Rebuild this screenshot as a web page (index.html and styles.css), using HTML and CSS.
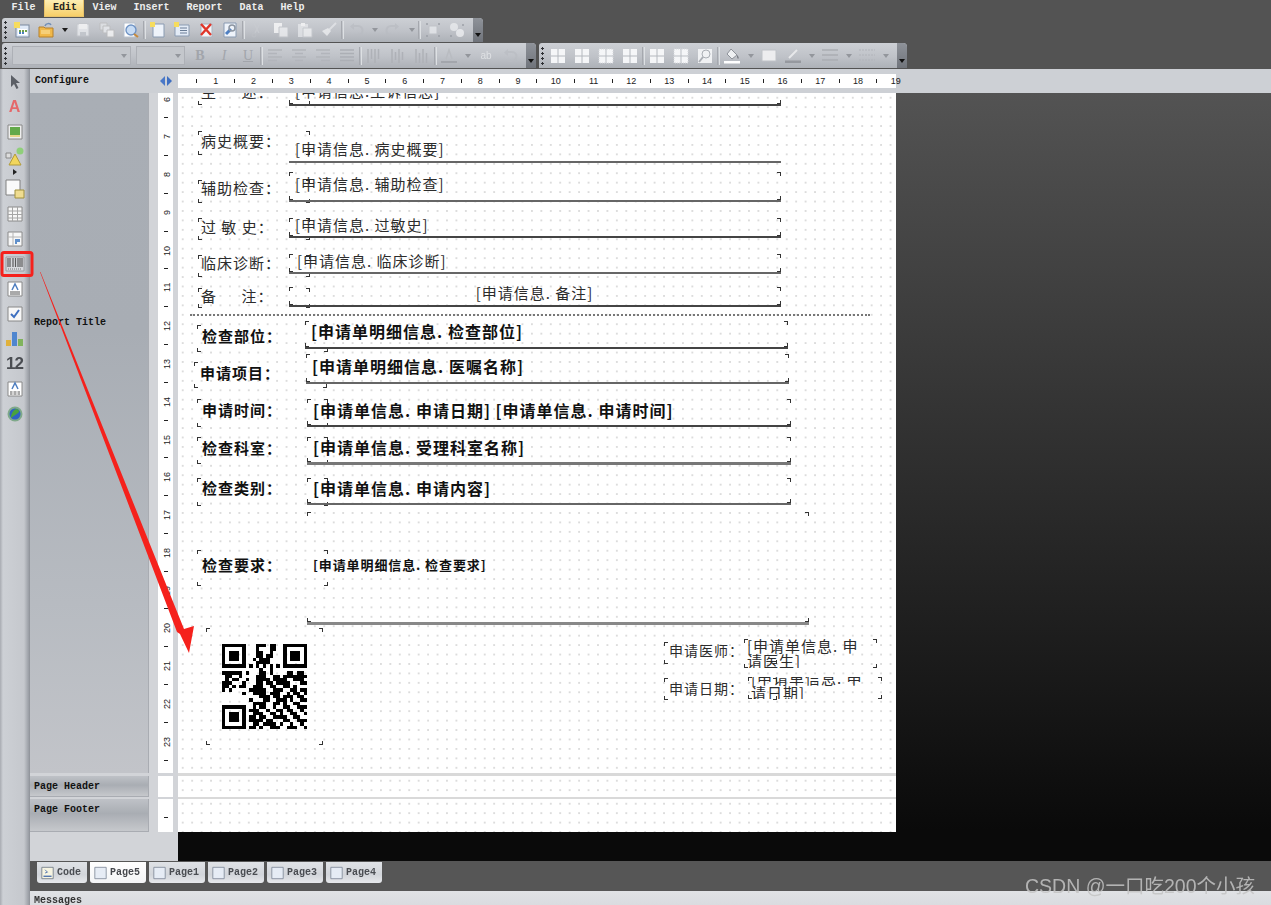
FILE: index.html
```html
<!DOCTYPE html>
<html lang="zh-CN">
<head>
<meta charset="utf-8">
<title>Report Designer</title>
<link rel="stylesheet" href="styles.css">
</head>
<body>
<svg class="defs" width="0" height="0" aria-hidden="true">
  <symbol id="new" viewBox="0 0 16 16"><rect x="2" y="3" width="13" height="12" fill="#dfe9f7" stroke="#7a8aa0"/><rect x="4" y="7" width="9" height="6" fill="#fff"/><path d="M5 8h2v2H5zM8 8h2v2H8zM11 8h2v2h-2z" fill="#6fa04a"/><path d="M5 10h2v2H5zM8 10h2v2H8z" fill="#4a7fc0"/><path d="M0 0h6v6H0z" fill="#f6dc5e"/></symbol>
  <symbol id="open" viewBox="0 0 16 16"><path d="M1 5h5l1 1h8v9H1z" fill="#f0b84a" stroke="#b5802c"/><path d="M3 9h9M3 11h9" stroke="#fbe6a8"/><path d="M7 4c1-3 5-3 6-1" fill="none" stroke="#6f8db5" stroke-width="1.5"/></symbol>
  <symbol id="save" viewBox="0 0 16 16"><path d="M2 2h12v12H2z" fill="#eef0f3" stroke="#c3c6cb"/><path d="M4 2h8v5H4z" fill="#fff"/><path d="M5 10h6v4H5z" fill="#c5c9cf"/></symbol>
  <symbol id="saveall" viewBox="0 0 16 16"><path d="M1 1h7v7H1z" fill="#e5e7ea" stroke="#bbb"/><path d="M4 4h7v7H4z" fill="#eef0f3" stroke="#bbb"/><path d="M8 8h7v7H8z" fill="#fff" stroke="#bbb"/></symbol>
  <symbol id="preview" viewBox="0 0 16 16"><path d="M1 1h11v14H1z" fill="#fff" stroke="#b9c2ce"/><circle cx="8" cy="8" r="5" fill="#c7dcf5" stroke="#6f93c4" stroke-width="1.4"/><path d="M11 12l4 3" stroke="#c78a3b" stroke-width="2"/></symbol>
  <symbol id="page" viewBox="0 0 16 16"><path d="M3 2h11v13H3z" fill="#eef3fa" stroke="#8a9bb2"/><path d="M0 0h5v5H0z" fill="#f6dc5e"/></symbol>
  <symbol id="dialog" viewBox="0 0 16 16"><path d="M1 3h14v11H1z" fill="#e3ebf6" stroke="#8a9bb2"/><path d="M6 6h7M6 8.500h7M6 11h7" stroke="#6a7d96"/><path d="M0 0h5v5H0z" fill="#f6dc5e"/></symbol>
  <symbol id="del" viewBox="0 0 16 16"><path d="M3 2h11v13H3z" fill="#f3f5f8" stroke="#a9b3c0"/><path d="M3 2l10 11M13 2L3 13" stroke="#e0362a" stroke-width="2.400"/></symbol>
  <symbol id="setup" viewBox="0 0 16 16"><path d="M2 1h12v14H2z" fill="#eef3fa" stroke="#8a9bb2"/><path d="M4 12l5-5" stroke="#4e7fc2" stroke-width="3"/><circle cx="10" cy="6" r="3" fill="none" stroke="#8c95a1" stroke-width="1.500"/></symbol>
  <symbol id="cut" viewBox="0 0 16 16"><path d="M11 1L6 11M5 1l5 10" stroke="#c9ccd1" stroke-width="1.500" fill="none"/><circle cx="5" cy="13" r="2" fill="none" stroke="#c0c3c8"/></symbol>
  <symbol id="copy" viewBox="0 0 16 16"><path d="M1 1h8v10H1z" fill="#fff"/><path d="M6 5h9v10H6z" fill="#f4f5f7" stroke="#c2c5ca"/></symbol>
  <symbol id="paste" viewBox="0 0 16 16"><path d="M1 2h10v13H1z" fill="#e9ebee"/><path d="M4 1h4v3H4z" fill="#fff"/><path d="M6 6h9v9H6z" fill="#f7f8f9" stroke="#c8cbd0"/></symbol>
  <symbol id="brush" viewBox="0 0 16 16"><path d="M15 1L8 8" stroke="#e8e9ec" stroke-width="2"/><path d="M1 9l6-3 3 3-4 5z" fill="#f2f3f5"/></symbol>
  <symbol id="undo" viewBox="0 0 16 16"><path d="M5 4h5a4 4 0 0 1 0 9H6" fill="none" stroke="#b9bcc2" stroke-width="2"/><path d="M6 1v7L2 4.500z" fill="#b9bcc2"/></symbol>
  <symbol id="redo" viewBox="0 0 16 16"><path d="M11 4H6a4 4 0 0 0 0 9h4" fill="none" stroke="#b9bcc2" stroke-width="2"/><path d="M10 1v7l4-3.500z" fill="#b9bcc2"/></symbol>
  <symbol id="group" viewBox="0 0 16 16"><path d="M4 4h8v8H4z" fill="#eceef1" stroke="#c0c3c8"/><path d="M1 1h2v2H1zM13 1h2v2h-2zM1 13h2v2H1zM13 13h2v2h-2z" fill="#9a9ea5"/></symbol>
  <symbol id="ungroup" viewBox="0 0 16 16"><circle cx="5" cy="5" r="4" fill="#eef0f2"/><circle cx="11" cy="11" r="4" fill="#f4f5f7"/><path d="M13 2h2v2h-2zM1 13h2v2H1z" fill="#9a9ea5"/></symbol>
  <symbol id="left" viewBox="0 0 16 16"><path d="M1 2h14M1 5.500h9M1 9h14M1 12.500h9" stroke="#b2b5bb" stroke-width="1.500"/></symbol>
  <symbol id="center" viewBox="0 0 16 16"><path d="M1 2h14M4 5.500h8M1 9h14M4 12.500h8" stroke="#b2b5bb" stroke-width="1.500"/></symbol>
  <symbol id="right" viewBox="0 0 16 16"><path d="M1 2h14M6 5.500h9M1 9h14M6 12.500h9" stroke="#b2b5bb" stroke-width="1.500"/></symbol>
  <symbol id="just" viewBox="0 0 16 16"><path d="M1 2h14M1 5.500h14M1 9h14M1 12.500h14" stroke="#acafb5" stroke-width="1.500"/></symbol>
  <symbol id="vtop" viewBox="0 0 16 16"><path d="M2 1v14M5.500 1v10M9 1v14M12.500 1v10" stroke="#aeb1b7" stroke-width="1.500"/></symbol>
  <symbol id="vmid" viewBox="0 0 16 16"><path d="M2 1v14M5.500 4v8M9 1v14M12.500 4v8" stroke="#aeb1b7" stroke-width="1.500"/></symbol>
  <symbol id="vbot" viewBox="0 0 16 16"><path d="M2 1v14M5.500 5v10M9 1v14M12.500 5v10" stroke="#aeb1b7" stroke-width="1.500"/></symbol>
  <symbol id="color" viewBox="0 0 16 16"><path d="M5 11L8 2l3 9" fill="none" stroke="#b9bcc1" stroke-width="1.500"/><path d="M0 13h16v2H0z" fill="#a3a6ac"/></symbol>
  <symbol id="grid" viewBox="0 0 16 16"><path d="M1 1h14v14H1z" fill="#f5f6f8"/><path d="M8 1v14M1 8h14" stroke="#b4b8be"/></symbol>
  <symbol id="griddot" viewBox="0 0 16 16"><path d="M1 1h14v14H1z" fill="#f5f6f8" stroke="#d7d9dd" stroke-dasharray="1 1"/><path d="M8 1v14M1 8h14" stroke="#b9bdc3"/></symbol>
  <symbol id="gridzoom" viewBox="0 0 16 16"><path d="M1 1h14v14H1z" fill="#f0f1f3"/><circle cx="9" cy="6" r="4" fill="none" stroke="#aaaeb4"/><path d="M6 9l-4 5" stroke="#aaaeb4" stroke-width="2"/></symbol>
  <symbol id="fill" viewBox="0 0 16 16"><path d="M7 1l6 6-5 4-5-5z" fill="#eef0f2" stroke="#8d9198"/><path d="M13 7c2 2 2 3 1 4-1-1-1-3-1-4z" fill="#70747b"/><path d="M0 13h16v2.500H0z" fill="#fff"/></symbol>
  <symbol id="rect" viewBox="0 0 16 16"><path d="M1 2h14v11H1z" fill="#ededef" stroke="#bfc2c7"/></symbol>
  <symbol id="line" viewBox="0 0 16 16"><path d="M4 10l8-8" stroke="#e7e8ea" stroke-width="2"/><path d="M0 12.500h16V15H0z" fill="#96999f"/></symbol>
  <symbol id="lines" viewBox="0 0 16 16"><path d="M0 2h16M0 7h16M0 12h16" stroke="#aaadb3" stroke-width="1.500"/></symbol>
  <symbol id="dash" viewBox="0 0 16 16"><path d="M0 2h16M0 7h16M0 12h16" stroke="#b1b4ba" stroke-dasharray="2 1"/></symbol>
  <symbol id="pointer" viewBox="0 0 16 16"><path d="M4 1v12l3-3 2.500 5 2-1L9 9h4z" fill="#5b5f66"/></symbol>
  <symbol id="img" viewBox="0 0 16 16"><path d="M1 1h14v14H1z" fill="#eee" stroke="#888"/><path d="M3 3h10v8H3z" fill="#63a94a"/><path d="M3 11h10v2H3z" fill="#e6d78a"/></symbol>
  <symbol id="shapes" viewBox="0 0 20 20"><path d="M1 6h5v5H1z" fill="#ddd" stroke="#888"/><path d="M10 7l6 11H4z" fill="#f2d65c" stroke="#b09a3a"/><circle cx="15" cy="4" r="3.500" fill="#8fcf7a"/></symbol>
  <symbol id="panel" viewBox="0 0 20 20"><path d="M1 1h14v15H1z" fill="#fafafa" stroke="#808080"/><path d="M10 11h9v8h-9z" fill="#efdc90" stroke="#a0903f"/></symbol>
  <symbol id="table" viewBox="0 0 16 16"><path d="M1 1h14v14H1z" fill="#f7f7f7" stroke="#8a8a8a"/><path d="M1 5h14M1 8.500h14M1 12h14M5.500 1v14M10.500 1v14" stroke="#a5a5a5"/></symbol>
  <symbol id="cross" viewBox="0 0 16 16"><path d="M1 1h14v14H1z" fill="#f7f7f7" stroke="#8a8a8a"/><path d="M6 1v14M1 6h14" stroke="#b5b5b5"/><path d="M8 8h5v3H8zM8 11h2v2H8z" fill="#5f8fca"/></symbol>
  <symbol id="barcode" viewBox="0 0 20 16"><path d="M1 1h18v14H1z" fill="#d8dade" stroke="#9a9da2"/><path d="M3 2v9M5 2v9M8 2v9M10.500 2v9M13 2v9M15 2v9M17 2v9" stroke="#5a5a5a" stroke-width="1.200"/><path d="M3 13h14" stroke="#777" stroke-dasharray="1 1"/></symbol>
  <symbol id="textbox" viewBox="0 0 16 16"><path d="M1 1h14v14H1z" fill="#fff" stroke="#888"/><path d="M5 9l3-6 3 6" fill="none" stroke="#4f7fc0" stroke-width="1.500"/><path d="M3 11h10M3 13h10" stroke="#555"/></symbol>
  <symbol id="check" viewBox="0 0 16 16"><path d="M1 1h14v14H1z" fill="#f7f7f7" stroke="#888"/><path d="M4 8l3 3 5-7" fill="none" stroke="#3d6fc0" stroke-width="2"/></symbol>
  <symbol id="bars" viewBox="0 0 20 16"><path d="M1 9h5v6H1z" fill="#e0b13c"/><path d="M7 1h5v14H7z" fill="#4f86cf"/><path d="M13 8h5v7h-5z" fill="#80b35c"/></symbol>
  <symbol id="agrid" viewBox="0 0 16 16"><path d="M1 1h14v14H1z" fill="#fff" stroke="#888"/><path d="M5 8l3-6 3 6" fill="none" stroke="#4f7fc0" stroke-width="1.500"/><path d="M3 10h10v4H3z" fill="#aaa"/><path d="M6 10v4M10 10v4" stroke="#fff"/></symbol>
  <symbol id="globe" viewBox="0 0 16 16"><circle cx="8" cy="8" r="7.500" fill="#7fa98a"/><circle cx="8" cy="8" r="5.500" fill="#2f62c4"/><path d="M9 3c3 0 4 3 2 4-2 2-5 3-7 5 0-4 2-8 5-9z" fill="#49a33c"/></symbol>
  <symbol id="code" viewBox="0 0 16 16"><path d="M1 1h14v14H1z" fill="#f6f4e2" stroke="#6d7684"/><path d="M5 4l3 3-3 1" fill="none" stroke="#3c64a8"/><path d="M3 12h10" stroke="#3c64a8" stroke-width="1.500"/></symbol>
  <symbol id="sheet" viewBox="0 0 16 16"><path d="M1 1h14v14H1z" fill="#e6ecf5" stroke="#7c8696"/></symbol>
</svg>

<div class="app">
  <header class="top">
    <nav class="menu">
      <span class="menu-item">File</span>
      <span class="menu-item active">Edit</span>
      <span class="menu-item">View</span>
      <span class="menu-item">Insert</span>
      <span class="menu-item">Report</span>
      <span class="menu-item">Data</span>
      <span class="menu-item">Help</span>
    </nav>
    <div class="bar bar-one">
      <i class="grip"></i>
      <span class="cell"><svg class="ic"><use href="#new"/></svg></span>
      <span class="cell"><svg class="ic"><use href="#open"/></svg></span>
      <span class="dd dark"></span>
      <span class="cell off"><svg class="ic"><use href="#save"/></svg></span>
      <span class="cell off"><svg class="ic"><use href="#saveall"/></svg></span>
      <span class="cell"><svg class="ic"><use href="#preview"/></svg></span>
      <i class="sep"></i>
      <span class="cell"><svg class="ic"><use href="#page"/></svg></span>
      <span class="cell"><svg class="ic"><use href="#dialog"/></svg></span>
      <span class="cell"><svg class="ic"><use href="#del"/></svg></span>
      <span class="cell"><svg class="ic"><use href="#setup"/></svg></span>
      <i class="sep"></i>
      <span class="cell off"><svg class="ic"><use href="#cut"/></svg></span>
      <span class="cell off"><svg class="ic"><use href="#copy"/></svg></span>
      <span class="cell off"><svg class="ic"><use href="#paste"/></svg></span>
      <span class="cell off"><svg class="ic"><use href="#brush"/></svg></span>
      <i class="sep"></i>
      <span class="cell off"><svg class="ic"><use href="#undo"/></svg></span>
      <span class="dd"></span>
      <span class="cell off"><svg class="ic"><use href="#redo"/></svg></span>
      <span class="dd"></span>
      <i class="sep"></i>
      <span class="cell off"><svg class="ic"><use href="#group"/></svg></span>
      <span class="cell off"><svg class="ic"><use href="#ungroup"/></svg></span>
      <span class="more"></span>
    </div>
    <div class="bar-row">
      <div class="bar bar-two">
        <i class="grip"></i>
        <span class="combo combo-font"><b class="dd"></b></span>
        <span class="combo combo-size"><b class="dd"></b></span>
        <span class="cell letter bold-l">B</span>
        <span class="cell letter ital-l">I</span>
        <span class="cell letter under-l">U</span>
        <i class="sep"></i>
        <span class="cell"><svg class="ic"><use href="#left"/></svg></span>
        <span class="cell"><svg class="ic"><use href="#center"/></svg></span>
        <span class="cell"><svg class="ic"><use href="#right"/></svg></span>
        <span class="cell"><svg class="ic"><use href="#just"/></svg></span>
        <i class="sep"></i>
        <span class="cell"><svg class="ic"><use href="#vtop"/></svg></span>
        <span class="cell"><svg class="ic"><use href="#vmid"/></svg></span>
        <span class="cell"><svg class="ic"><use href="#vbot"/></svg></span>
        <i class="sep"></i>
        <span class="cell"><svg class="ic"><use href="#color"/></svg></span>
        <span class="dd"></span>
        <span class="cell letter ab">ab</span>
        <span class="cell off"><svg class="ic"><use href="#undo"/></svg></span>
        <span class="more"></span>
      </div>
      <div class="bar bar-three">
        <i class="grip"></i>
        <span class="cell"><svg class="ic"><use href="#grid"/></svg></span>
        <span class="cell"><svg class="ic"><use href="#grid"/></svg></span>
        <span class="cell"><svg class="ic"><use href="#griddot"/></svg></span>
        <span class="cell"><svg class="ic"><use href="#grid"/></svg></span>
        <i class="sep"></i>
        <span class="cell"><svg class="ic"><use href="#grid"/></svg></span>
        <span class="cell"><svg class="ic"><use href="#griddot"/></svg></span>
        <span class="cell"><svg class="ic"><use href="#gridzoom"/></svg></span>
        <i class="sep"></i>
        <span class="cell"><svg class="ic"><use href="#fill"/></svg></span>
        <span class="dd"></span>
        <span class="cell"><svg class="ic"><use href="#rect"/></svg></span>
        <span class="cell"><svg class="ic"><use href="#line"/></svg></span>
        <span class="dd"></span>
        <span class="cell"><svg class="ic"><use href="#lines"/></svg></span>
        <span class="dd"></span>
        <span class="cell"><svg class="ic"><use href="#dash"/></svg></span>
        <span class="dd"></span>
        <span class="more"></span>
      </div>
    </div>
  </header>

  <div class="main">
    <aside class="tools">
      <span class="tool"><svg class="ic"><use href="#pointer"/></svg></span>
      <span class="tool tool-a">A</span>
      <span class="tool"><svg class="ic"><use href="#img"/></svg></span>
      <span class="tool"><svg class="ic-lg"><use href="#shapes"/></svg></span>
      <span class="tool-more"></span>
      <span class="tool"><svg class="ic-lg"><use href="#panel"/></svg></span>
      <span class="tool"><svg class="ic"><use href="#table"/></svg></span>
      <span class="tool"><svg class="ic"><use href="#cross"/></svg></span>
      <span class="tool"><svg class="ic-lg"><use href="#barcode"/></svg></span>
      <span class="tool"><svg class="ic"><use href="#textbox"/></svg></span>
      <span class="tool"><svg class="ic"><use href="#check"/></svg></span>
      <span class="tool"><svg class="ic-lg"><use href="#bars"/></svg></span>
      <span class="tool tool-num">12</span>
      <span class="tool"><svg class="ic"><use href="#agrid"/></svg></span>
      <span class="tool"><svg class="ic"><use href="#globe"/></svg></span>
    </aside>

    <div class="work">
      <div class="rule-row">
        <span class="configure">Configure</span>
        <span class="arrows"><i class="ar-l"></i><i class="ar-r"></i></span>
        <div class="hruler">
          <i></i><span>1</span><i></i><span>2</span><i></i><span>3</span><i></i><span>4</span><i></i><span>5</span><i></i><span>6</span><i></i><span>7</span><i></i><span>8</span><i></i><span>9</span><i></i><span>10</span><i></i><span>11</span><i></i><span>12</span><i></i><span>13</span><i></i><span>14</span><i></i><span>15</span><i></i><span>16</span><i></i><span>17</span><i></i><span>18</span><i></i><span>19</span>
        </div>
      </div>

      <div class="designer">
        <div class="side">
          <div class="side-row row-title">
            <div class="band-label label-title">Report Title</div>
            <div class="vruler">
              <div class="vr-track">
                <span>6</span><i></i><span>7</span><i></i><span>8</span><i></i><span>9</span><i></i><span>10</span><i></i><span>11</span><i></i><span>12</span><i></i><span>13</span><i></i><span>14</span><i></i><span>15</span><i></i><span>16</span><i></i><span>17</span><i></i><span>18</span><i></i><span>19</span><i></i><span>20</span><i></i><span>21</span><i></i><span>22</span><i></i><span>23</span><i></i>
              </div>
            </div>
          </div>
          <div class="side-row row-header">
            <div class="band-label label-small">Page Header</div>
            <div class="vruler"></div>
          </div>
          <div class="side-row row-footer">
            <div class="band-label label-small">Page Footer</div>
            <div class="vruler vr-track"><i></i></div>
          </div>
        </div>

        <div class="stage">
          <div class="page">
            <section class="band band-title">
              <div class="box t l-zhu">主&emsp;&ensp;述：</div>
              <div class="box t f-zhu line">[申请信息.主诉信息]</div>
              <div class="box t l-hist">病史概要：</div>
              <div class="t f-hist line field">[申请信息. 病史概要]</div>
              <div class="box t l-aux">辅助检查：</div>
              <div class="box t f-aux line">[申请信息. 辅助检查]</div>
              <div class="box t l-all">过 敏 史：</div>
              <div class="box t f-all line">[申请信息. 过敏史]</div>
              <div class="box t l-cli">临床诊断：</div>
              <div class="box t f-cli line">[申请信息. 临床诊断]</div>
              <div class="box t l-note">备&emsp;&ensp;注：</div>
              <div class="box t f-note line">[申请信息. 备注]</div>
              <div class="dashed"></div>

              <div class="box b l-part">检查部位：</div>
              <div class="box b f-part line">[申请单明细信息. 检查部位]</div>
              <div class="box b l-item">申请项目：</div>
              <div class="box b f-item line">[申请单明细信息. 医嘱名称]</div>
              <div class="box b l-time">申请时间：</div>
              <div class="box b f-time line">[申请单信息. 申请日期] [申请单信息. 申请时间]</div>
              <div class="box b l-dept">检查科室：</div>
              <div class="box b f-dept line">[申请单信息. 受理科室名称]</div>
              <div class="box b l-type">检查类别：</div>
              <div class="box b f-type line">[申请单信息. 申请内容]</div>
              <div class="box b l-req">检查要求：</div>
              <div class="box b f-req line">[申请单明细信息. 检查要求]</div>

              <div class="box qr-box">
                <svg class="qr" viewBox="0 0 25 25" shape-rendering="crispEdges">
                  <path stroke="#000" fill="none" d="M0 .5H7M10 .5H13M14 .5H16M18 .5H25M0 1.500H1M6 1.500H7M10 1.500H11M14 1.500H16M18 1.500H19M24 1.500H25M0 2.500H1M2 2.500H5M6 2.500H7M10 2.500H12M14 2.500H15M18 2.500H19M20 2.500H23M24 2.500H25M0 3.500H1M2 3.500H5M6 3.500H7M10 3.500H12M13 3.500H15M18 3.500H19M20 3.500H23M24 3.500H25M0 4.500H1M2 4.500H5M6 4.500H7M9 4.500H10M11 4.500H14M18 4.500H19M20 4.500H23M24 4.500H25M0 5.500H1M6 5.500H7M10 5.500H14M18 5.500H19M24 5.500H25M0 6.500H7M8 6.500H9M10 6.500H11M12 6.500H13M14 6.500H15M16 6.500H17M18 6.500H25M11 7.500H12M14 7.500H15M0 8.500H6M7 8.500H8M11 8.500H13M14 8.500H15M19 8.500H21M22 8.500H24M1 9.500H3M5 9.500H6M10 9.500H13M15 9.500H17M18 9.500H25M1 10.500H2M3 10.500H5M7 10.500H8M10 10.500H14M15 10.500H19M21 10.500H24M0 11.500H3M6 11.500H7M10 11.500H12M13 11.500H15M16 11.500H20M23 11.500H25M0 12.500H2M3 12.500H4M5 12.500H7M9 12.500H12M14 12.500H16M18 12.500H20M21 12.500H22M0 13.500H1M2 13.500H3M8 13.500H13M15 13.500H18M20 13.500H22M23 13.500H25M6 14.500H7M9 14.500H13M14 14.500H17M19 14.500H20M21 14.500H23M24 14.500H25M11 15.500H14M15 15.500H17M18 15.500H21M22 15.500H24M8 16.500H9M12 16.500H14M16 16.500H19M20 16.500H21M23 16.500H25M9 17.500H13M15 17.500H17M18 17.500H19M21 17.500H23M0 18.500H7M9 18.500H10M11 18.500H13M15 18.500H16M18 18.500H20M22 18.500H25M0 19.500H1M6 19.500H7M8 19.500H11M13 19.500H14M16 19.500H18M19 19.500H21M23 19.500H24M0 20.500H1M2 20.500H5M6 20.500H7M9 20.500H12M14 20.500H16M17 20.500H18M20 20.500H22M24 20.500H25M0 21.500H1M2 21.500H5M6 21.500H7M8 21.500H10M11 21.500H13M15 21.500H19M21 21.500H23M0 22.500H1M2 22.500H5M6 22.500H7M8 22.500H12M13 22.500H15M18 22.500H20M22 22.500H25M0 23.500H1M6 23.500H7M9 23.500H11M12 23.500H16M17 23.500H18M20 23.500H21M23 23.500H24M0 24.500H7M8 24.500H10M11 24.500H12M14 24.500H17M19 24.500H22M24 24.500H25"/>
                </svg>
              </div>

              <div class="box t l-doc">申请医师：</div>
              <div class="box t f-doc"><span class="wrap wrap-doc">[申请单信息. 申请医生]</span></div>
              <div class="box t l-date">申请日期：</div>
              <div class="box t f-date"><span class="wrap wrap-date">[申请单信息. 申请日期]</span></div>
            </section>
            <section class="band band-header"></section>
            <section class="band band-footer"></section>
          </div>
        </div>
      </div>

      <nav class="tabs">
        <span class="tab"><svg class="tab-ic"><use href="#code"/></svg>Code</span>
        <span class="tab tab-on"><svg class="tab-ic"><use href="#sheet"/></svg>Page5</span>
        <span class="tab"><svg class="tab-ic"><use href="#sheet"/></svg>Page1</span>
        <span class="tab"><svg class="tab-ic"><use href="#sheet"/></svg>Page2</span>
        <span class="tab"><svg class="tab-ic"><use href="#sheet"/></svg>Page3</span>
        <span class="tab"><svg class="tab-ic"><use href="#sheet"/></svg>Page4</span>
      </nav>
      <div class="messages">Messages</div>
    </div>
  </div>

  <svg class="annot" viewBox="0 0 1271 905" aria-hidden="true">
    <rect class="annot-box" x="2" y="252.500" width="30" height="23" rx="2"/>
    <polygon class="annot-arrow" points="40,272 40.500,272 184,629 194,626 189,653 180,634 177,632"/>
  </svg>
  <div class="watermark">CSDN @一口吃200个小孩</div>
</div>
</body>
</html>
```

FILE: styles.css
```css
* { box-sizing: border-box; }
html, body { margin: 0; height: 100%; overflow: hidden; background: #555; }
.defs { position: absolute; }
.app {
  position: relative;
  width: 1271px;
  height: 905px;
  display: flex;
  flex-direction: column;
  overflow: hidden;
  font-family: "Liberation Mono", "DejaVu Sans Mono", monospace;
  font-size: 10px;
  color: #111;
  filter: blur(.4px);
}

/* top chrome */
.top { height: 69px; flex: none; background: #535353; display: flex; flex-direction: column; }
.menu { height: 18px; display: flex; padding-left: 3px; color: #eee; line-height: 15px; font-weight: 700; }
.menu-item { padding: 0 8.500px; height: 17px; font-size: 10px; }
.menu-item.active {
  padding: 0 8px;
  width: 40px;
  color: #222;
  background: linear-gradient(#fdeeb4, #f8cf68);
  border: 1px solid #e9c36a;
  border-top: 0;
  line-height: 15px;
  text-align: center;
}
.bar {
  height: 25px;
  margin-left: 2px;
  display: flex;
  align-items: center;
  position: relative;
  background: linear-gradient(#cdd0d5, #bfc2c8 55%, #adb1b7);
  border-radius: 3px 4px 0 0;
  color: #a2a5ab;
}
.bar-one { width: 481px; }
.bar-row { height: 26px; display: flex; margin-top: 1px; }
.bar-two { width: 534px; }
.bar-three { width: 368px; margin-left: 3px; }
.grip {
  width: 8px;
  height: 20px;
  flex: none;
  background: radial-gradient(circle, #2e3034 1px, transparent 1.300px) 1px 0 / 5px 5px repeat-y;
}
.bar-three .grip { width: 7px; }
.cell { width: 24px; height: 24px; flex: none; display: flex; align-items: center; justify-content: center; }
.ic { width: 16px; height: 16px; display: block; }
.ic-lg { width: 20px; height: 20px; display: block; }
.off { opacity: .7; }
.sep { width: 3px; height: 18px; flex: none; border-left: 1px solid #a5a8ae; border-right: 1px solid #dde0e3; }
.dd { width: 13px; height: 24px; flex: none; display: flex; align-items: center; justify-content: center; }
.dd::after { content: ""; border: 3.500px solid transparent; border-top: 4px solid #93969c; border-bottom: 0; }
.dd.dark::after { border-top-color: #1c1c1c; }
.more {
  position: absolute;
  right: 0;
  top: 0;
  bottom: 0;
  width: 10px;
  background: linear-gradient(#8e9299, #70747b);
  border-radius: 0 4px 0 0;
}
.more::after {
  content: "";
  position: absolute;
  left: 2px;
  bottom: 5px;
  border: 3px solid transparent;
  border-top: 4px solid #111;
  border-bottom: 0;
}
.combo {
  height: 19px;
  flex: none;
  display: flex;
  justify-content: flex-end;
  align-items: center;
  background: #c4c7cc;
  border: 1px solid #adb0b6;
}
.combo .dd { height: 17px; }
.combo-font { width: 119px; margin: 0 0 0 2px; }
.combo-size { width: 49px; margin: 0 3px 0 5px; }
.letter { font-family: "Liberation Serif", serif; font-size: 14px; }
.bold-l { font-weight: 700; }
.ital-l { font-style: italic; }
.under-l { text-decoration: underline; }
.ab { font-size: 10px; color: #dfe1e4; font-family: "Liberation Sans", sans-serif; }

/* main */
.main { flex: 1; display: flex; min-height: 0; }
.tools {
  width: 30px;
  flex: none;
  display: flex;
  flex-direction: column;
  align-items: center;
  padding-right: 1px;
  background: linear-gradient(90deg, #a8abb1 0, #cdd0d5 3px, #c5c8cd 24px, #989ca3 29px, #8c9096 30px);
}
.tool { height: 25px; width: 29px; flex: none; display: flex; align-items: center; justify-content: center; }
.tool-more { height: 6px; flex: none; border: 3px solid transparent; border-left: 4px solid #222; border-right: 0; margin-bottom: 1px; margin-top: 0; }
.tool-a { color: #e4696b; font: 700 16px "Liberation Sans", sans-serif; }
.tool-num { color: #4a4d52; font: 700 17px "Liberation Sans", sans-serif; letter-spacing: -1px; }
.work { flex: 1; display: flex; flex-direction: column; min-width: 0; }

/* ruler */
.rule-row { height: 24px; flex: none; display: flex; align-items: center; background: #cdd0d5; }
.configure { width: 128px; padding-left: 5px; flex: none; padding-bottom: 1px; font-weight: 700; }
.arrows { width: 15px; margin-right: 5px; flex: none; display: flex; gap: 2px; justify-content: center; }
.ar-l { border: 5px solid transparent; border-right: 5px solid #4a78c8; border-left: 0; }
.ar-r { border: 5px solid transparent; border-left: 5px solid #3f6fc2; border-right: 0; }
.hruler {
  width: 718px;
  height: 14px;
  flex: none;
  display: flex;
  align-items: center;
  padding-left: 9.450px;
  background: #fff;
  font-size: 9px;
  line-height: 14px;
  color: #222;
}
.hruler span, .hruler i { width: 18.900px; flex: none; text-align: center; font-family: "Liberation Sans", sans-serif; }
.hruler i { display: flex; justify-content: center; }
.hruler i::after { content: ""; width: 1px; height: 4px; background: #222; }

/* designer */
.designer { height: 768px; flex: none; display: flex; }
.side { width: 148px; flex: none; display: flex; flex-direction: column; background: #d2d4d8; }
.side-row { display: flex; }
.row-title { height: 680px; margin-bottom: 3px; }
.row-header { height: 21px; margin-bottom: 2px; }
.row-footer { height: 33px; }
.band-label { width: 119px; flex: none; border-right: 1px solid #a9acb2; font-weight: 700; }
.label-title {
  padding: 224px 0 0 4px;
  background: linear-gradient(#a9aeb5, #a8adb4 35%, #b7bbc1 75%, #c2c4c9);
}
.label-small {
  padding: 5px 0 0 4px;
  background: linear-gradient(#bfc2c7, #a9adb3 45%, #c6c8cc);
  border-bottom: 1px solid #a9acb2;
}
.vruler { width: 15px; margin-left: 9px; flex: none; background: #fff; overflow: hidden; font: 9px/18.900px "Liberation Sans", sans-serif; color: #222; }
.vr-track { margin-top: -3.500px; }
.vr-track span { display: flex; justify-content: center; align-items: center; height: 18.900px; writing-mode: vertical-rl; transform: rotate(180deg); }
.vr-track i { display: flex; justify-content: center; align-items: center; height: 18.900px; }
.vr-track i::after { content: ""; width: 4px; height: 1px; background: #222; }
.row-footer .vr-track { margin-top: 0; padding-top: 9px; }
.stage { flex: 1; background: linear-gradient(#535353, #0a0a0a 96%); }
.page { width: 718px; height: 739px; display: flex; flex-direction: column; background: #d9d9d9; }
.band {
  background-color: #fff;
  background-image: radial-gradient(circle, #dcdcdc .7px, transparent 1px);
  background-size: 9.450px 9.450px;
  position: relative;
  overflow: hidden;
  flex: none;
}
.band-title { height: 680px; font-family: "Noto Sans CJK SC", sans-serif; color: #2c2c2c; }
.band-header { height: 21px; margin-top: 3px; }
.band-footer { height: 33px; margin-top: 2px; }

/* report objects: their place on the canvas is the content */
.box, .field {
  position: absolute;
  white-space: nowrap;
}
.box {
  --c: #333;
  background:
    linear-gradient(var(--c), var(--c)) 0 0 / 4px 1px no-repeat,
    linear-gradient(var(--c), var(--c)) 0 0 / 1px 4px no-repeat,
    linear-gradient(var(--c), var(--c)) 100% 0 / 4px 1px no-repeat,
    linear-gradient(var(--c), var(--c)) 100% 0 / 1px 4px no-repeat,
    linear-gradient(var(--c), var(--c)) 0 100% / 4px 1px no-repeat,
    linear-gradient(var(--c), var(--c)) 0 100% / 1px 4px no-repeat,
    linear-gradient(var(--c), var(--c)) 100% 100% / 4px 1px no-repeat,
    linear-gradient(var(--c), var(--c)) 100% 100% / 1px 4px no-repeat;
}
.t { font-size: 15px; font-weight: 400; padding-left: 3px; letter-spacing: 1px; }
.b { font-size: 15px; font-weight: 700; padding-left: 5px; color: #111; letter-spacing: 1px; }
.line { border-bottom: 2px solid #444; padding-left: 6px; }
.l-zhu, .l-hist, .l-aux, .l-all, .l-cli, .l-note { left: 20px; width: 112px; }
.l-zhu { top: -12px; height: 24px; line-height: 22px; }
.l-hist { top: 38px; height: 24px; line-height: 20px; }
.l-aux { top: 87px; height: 23px; line-height: 16px; }
.l-all { top: 125px; height: 22px; line-height: 18px; }
.l-cli { top: 162px; height: 22px; line-height: 16px; }
.l-note { top: 195px; height: 20px; line-height: 16px; }
.f-zhu, .f-hist, .f-aux, .f-all, .f-cli, .f-note { left: 111px; width: 492px; }
.f-zhu { top: -8px; height: 21px; line-height: 12px; }
.f-hist { top: 40px; height: 30px; line-height: 32px; border-bottom-color: #666; }
.f-aux { top: 79px; height: 30px; line-height: 24px; border-bottom-color: #666; }
.f-all { top: 125px; height: 20px; line-height: 14px; }
.f-cli { top: 161px; height: 20px; line-height: 14px; padding-left: 8px; border-bottom-color: #666; }
.f-note { top: 194px; height: 20px; line-height: 12px; text-align: center; padding-left: 0; padding-right: 1px; }
.dashed { position: absolute; left: 12px; top: 221px; width: 680px; border-top: 2px dotted #777; }

.l-part, .l-time, .l-dept, .l-type, .l-req { left: 19px; width: 131px; }
.l-part { top: 232px; height: 27px; line-height: 22px; }
.l-item { left: 16px; width: 133px; top: 269px; height: 26px; line-height: 22px; padding-left: 6px; }
.l-time { top: 306px; height: 28px; line-height: 22px; }
.l-dept { top: 344px; height: 27px; line-height: 22px; }
.l-type { top: 385px; height: 28px; line-height: 20px; }
.l-req { top: 457px; height: 36px; line-height: 30px; }
.f-part, .f-item, .f-time, .f-dept, .f-type, .f-req { font-size: 16px; color: #111; }
.f-part { left: 127px; width: 483px; top: 228px; height: 28px; line-height: 20px; }
.f-item { left: 128px; width: 483px; top: 261px; height: 30px; line-height: 24px; border-bottom-color: #666; }
.f-time { left: 129px; width: 484px; top: 306px; height: 28px; line-height: 22px; }
.f-dept { left: 129px; width: 484px; top: 344px; height: 28px; line-height: 20px; border-bottom: 3px solid #777; }
.f-type { left: 129px; width: 484px; top: 385px; height: 27px; line-height: 20px; border-bottom-color: #666; }
.f-req { left: 129px; width: 502px; top: 419px; height: 113px; line-height: 106px; font-size: 13px; letter-spacing: .9px; border-bottom: 3px solid #888; }

.qr-box { left: 28px; top: 535px; width: 117px; height: 117px; padding: 16px; letter-spacing: 0; }
.qr { display: block; width: 85px; height: 85px; }

.l-doc, .l-date { left: 486px; width: 113px; height: 22px; padding-left: 5px; font-size: 14px; }
.l-doc { top: 549px; line-height: 17px; }
.l-date { top: 585px; line-height: 20px; }
.f-doc, .f-date { overflow: hidden; font-size: 15px; line-height: 15px; padding: 0 10px 0 3px; white-space: normal; }
.f-doc { left: 566px; width: 133px; top: 546px; height: 29px; }
.f-date { left: 570px; width: 134px; top: 584px; height: 22px; }
.wrap { display: block; }
.wrap-doc { margin-top: -1px; }
.wrap-date { margin-top: -7px; }

/* tabs and messages */
.tabs { height: 30px; flex: none; display: flex; gap: 3px; padding: 1px 0 0 7px; background: #565656; }
.tab {
  width: 56px;
  height: 21px;
  display: flex;
  align-items: center;
  gap: 3px;
  padding: 0 0 0 4px;
  color: #4a4d52;
  font-weight: 700;
  background: linear-gradient(#dfe2e6, #d2d5da 60%, #e6e8eb);
  border-bottom-left-radius: 3px;
  border-bottom-right-radius: 3px;
}
.tab:first-child { width: 50px; }
.tab-on { background: linear-gradient(#fff, #f3f4f6); color: #45484d; }
.tab-ic { width: 13px; height: 14px; flex: none; }
.messages { flex: 1; padding-left: 4px; line-height: 20px; font-weight: 700; color: #333; background: linear-gradient(#e0e2e5, #d7d9dd); }

/* overlays */
.annot { position: absolute; inset: 0; width: 1271px; height: 905px; pointer-events: none; }
.annot-box { fill: none; stroke: #f5211c; stroke-width: 3; }
.annot-arrow { fill: #f5211c; }
.watermark {
  position: absolute;
  right: 16px;
  top: 874px;
  font: 19.500px/24px "Liberation Sans", "Noto Sans CJK SC", sans-serif;
  color: rgba(195, 195, 195, .85);
  white-space: nowrap;
}
```
